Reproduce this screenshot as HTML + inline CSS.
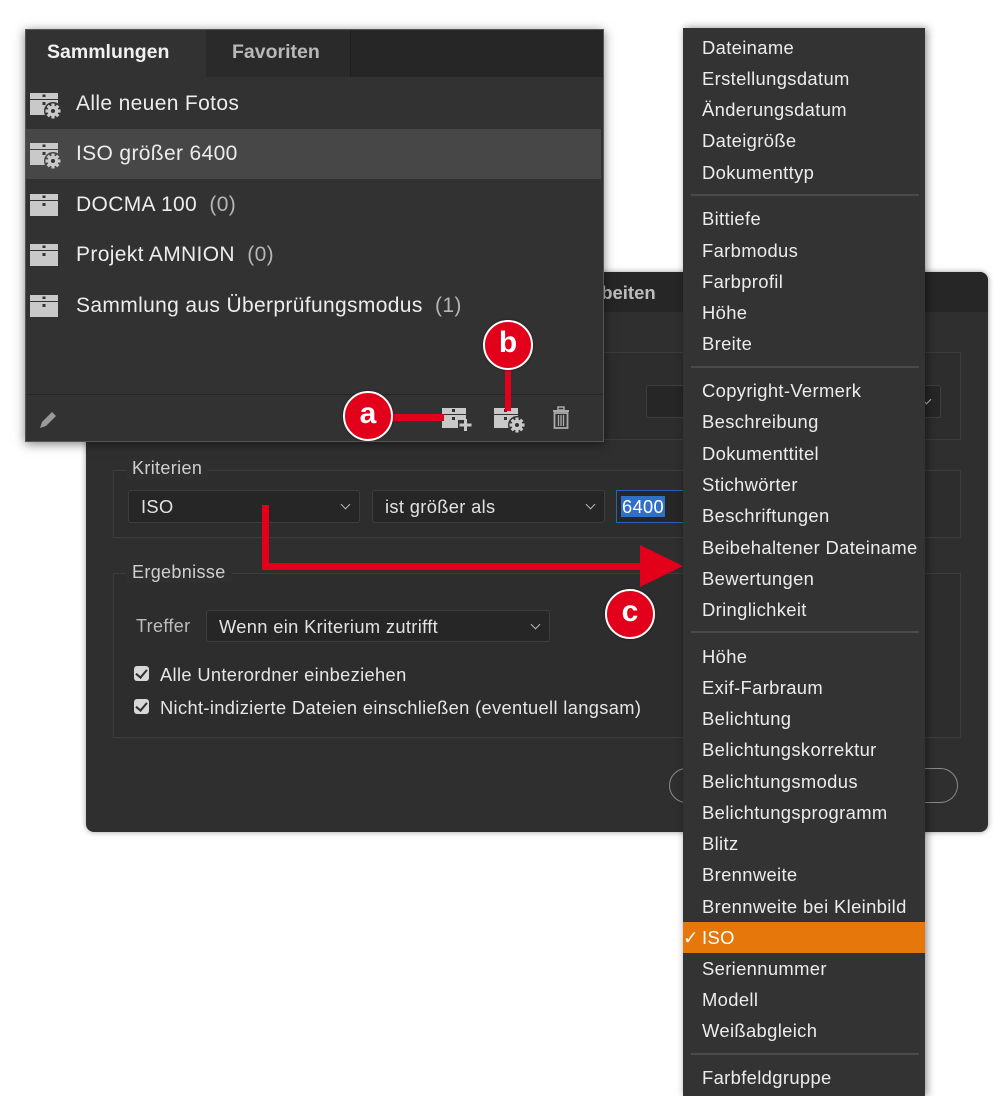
<!DOCTYPE html>
<html><head><meta charset="utf-8"><style>
*{margin:0;padding:0;box-sizing:border-box}
body{width:1000px;height:1096px;background:#fff;position:relative;overflow:hidden;font-family:"Liberation Sans",sans-serif;color:#e6e6e6}
.a{position:absolute}
.dlg{left:86px;top:272px;width:902px;height:560px;background:#2f2f2f;border-radius:8px;overflow:hidden;box-shadow:0 0 6px rgba(0,0,0,.4);letter-spacing:.35px}
.grp{border:1px solid #3c3c3c;background:#2d2d2d}
.sel{background:#262626;border:1px solid #3e3e3e;border-radius:3px;font-size:18.3px;line-height:31px;padding-left:12px;color:#e2e2e2}
.chev{position:absolute;right:10px;top:10px;width:7px;height:7px;border-right:1.5px solid #bbb;border-bottom:1.5px solid #bbb;transform:rotate(45deg)}
.lbl{font-size:18px;color:#cfcfcf;background:#2f2f2f;padding:0 6px}
.panel{left:25px;top:29px;width:579px;height:413px;background:#323232;box-shadow:0 2px 10px rgba(0,0,0,.5);border:1px solid #555}
.row{position:absolute;left:0;width:575px;height:50px;font-size:21px;line-height:50px;padding-left:50px;color:#ececec;letter-spacing:.35px}
.row .c{color:#b5b5b5}
.menu{left:683px;top:28px;width:242px;height:1068px;background:#333;box-shadow:2px 0 8px rgba(0,0,0,.45)}
.mi{position:absolute;left:0;width:242px;height:31px;line-height:31px;padding-left:19px;font-size:18.4px;color:#ececec;letter-spacing:.35px}
.sep{position:absolute;left:8px;width:228px;height:2px;background:#4a4a4a}
.cb{position:absolute;width:15px;height:15px;background:#d8d8d8;border-radius:3px}
.cb:after{content:"";position:absolute;left:4px;top:1px;width:5px;height:9px;border-right:2px solid #2f2f2f;border-bottom:2px solid #2f2f2f;transform:rotate(40deg)}
.circ{position:absolute;width:50px;height:50px;border-radius:50%;background:#e2001a;border:2.5px solid #fff;color:#fff;font-weight:bold;font-size:30px;text-align:center;line-height:42px;box-shadow:0 0 2px rgba(0,0,0,.5)}
.red{position:absolute;background:#e2001a}
</style></head><body>

<svg width="0" height="0" style="position:absolute">
  <defs>
    <g id="gr">
      <g fill="#c9c9c9">
        <rect x="-1.6" y="-7.5" width="3.2" height="15"/>
        <rect x="-1.6" y="-7.5" width="3.2" height="15" transform="rotate(45)"/>
        <rect x="-1.6" y="-7.5" width="3.2" height="15" transform="rotate(90)"/>
        <rect x="-1.6" y="-7.5" width="3.2" height="15" transform="rotate(135)"/>
        <circle r="5.3"/>
      </g>
      <circle r="2" fill="#333"/>
    </g>
    <g id="bx"><rect x="4" y="0" width="28" height="6" fill="#c9c9c9"/><rect x="4" y="7" width="28" height="15" fill="#c9c9c9"/><rect x="16.5" y="1.5" width="3" height="2.5" fill="#333"/><rect x="16.5" y="9" width="3" height="3" fill="#333"/></g>
  </defs>
</svg>

<!-- dialog -->
<div class="a dlg">
  <div class="a" style="left:0;top:0;width:902px;height:40px;background:#262626"></div>
  <div class="a" style="left:508px;top:10px;font-size:18.5px;font-weight:bold;color:#bdbdbd;letter-spacing:0">rbeiten</div>
  <div class="a grp" style="left:27px;top:80px;width:848px;height:88px"></div>
  <div class="a sel" style="left:560px;top:113px;width:295px;height:33px"><span class="chev"></span></div>
  <div class="a grp" style="left:27px;top:198px;width:848px;height:68px"></div>
  <div class="a lbl" style="left:40px;top:186px">Kriterien</div>
  <div class="a sel" style="left:42px;top:218px;width:232px;height:33px">ISO<span class="chev"></span></div>
  <div class="a sel" style="left:286px;top:218px;width:233px;height:33px">ist größer als<span class="chev"></span></div>
  <div class="a" style="left:530px;top:218px;width:80px;height:33px;border:1px solid #2a62b4;background:#262626"><span style="position:absolute;left:4px;top:5px;background:#2f6fc6;color:#fff;font-size:18.3px;line-height:21px;padding:0 1px">6400</span></div>
  <div class="a grp" style="left:27px;top:301px;width:848px;height:165px"></div>
  <div class="a lbl" style="left:40px;top:290px">Ergebnisse</div>
  <div class="a" style="left:50px;top:344px;font-size:18px;color:#bdbdbd">Treffer</div>
  <div class="a sel" style="left:120px;top:338px;width:344px;height:32px">Wenn ein Kriterium zutrifft<span class="chev"></span></div>
  <div class="cb" style="left:48px;top:394px"></div>
  <div class="a" style="left:74px;top:392px;font-size:18.3px">Alle Unterordner einbeziehen</div>
  <div class="cb" style="left:48px;top:427px"></div>
  <div class="a" style="left:74px;top:425px;font-size:18.3px">Nicht-indizierte Dateien einschließen (eventuell langsam)</div>
  <div class="a" style="left:583px;top:496px;width:289px;height:35px;border:1.5px solid #8a8a8a;border-radius:18px"></div>
</div>

<!-- collections panel -->
<div class="a panel">
  <div class="a" style="left:0;top:0;width:577px;height:47px;background:#262626"></div>
  <div class="a" style="left:0;top:0;width:180px;height:48px;background:#323232;font-size:19.5px;font-weight:bold;line-height:44px;padding-left:21px;color:#f0f0f0">Sammlungen</div>
  <div class="a" style="left:180px;top:0;width:145px;height:47px;background:#2a2a2a;border-right:1px solid #1f1f1f;font-size:19.5px;font-weight:bold;line-height:44px;padding-left:26px;color:#b8b8b8">Favoriten</div>
  <div class="row" style="top:49px">Alle neuen Fotos</div>
  <div class="row" style="top:99px;background:#474747">ISO größer 6400</div>
  <div class="row" style="top:150px">DOCMA 100 <span class="c">&nbsp;(0)</span></div>
  <div class="row" style="top:200px">Projekt AMNION <span class="c">&nbsp;(0)</span></div>
  <div class="row" style="top:251px">Sammlung aus Überprüfungsmodus <span class="c">&nbsp;(1)</span></div>
  <svg class="a" style="left:0;top:49px" width="50" height="260">
    <use href="#bx" x="0" y="14"/><circle cx="27" cy="32" r="9" fill="#323232"/><use href="#gr" transform="translate(27 32)"/>
    <use href="#bx" x="0" y="64"/><circle cx="27" cy="82" r="9" fill="#474747"/><use href="#gr" transform="translate(27 82)"/>
    <use href="#bx" x="0" y="115"/>
    <use href="#bx" x="0" y="165"/>
    <use href="#bx" x="0" y="216"/>
  </svg>
  <div class="a" style="left:0;top:364px;width:577px;height:1px;background:#262626"></div>
  <svg class="a" style="left:10px;top:378px" width="24" height="24"><path d="M4 20 L6 14 L16 4 L20 8 L10 18 Z" fill="#9a9a9a"/></svg>
  <svg class="a" style="left:414px;top:376px" width="40" height="26">
    <rect x="2" y="2" width="24" height="6" fill="#c9c9c9"/><rect x="2" y="9" width="24" height="13" fill="#c9c9c9"/><rect x="12" y="3" width="3" height="3" fill="#333"/><rect x="12" y="11" width="3" height="3" fill="#333"/>
    <rect x="18" y="14" width="14" height="10" fill="#323232"/><rect x="24" y="13" width="3" height="12" fill="#c9c9c9"/><rect x="19.5" y="17.5" width="12" height="3" fill="#c9c9c9"/>
  </svg>
  <svg class="a" style="left:466px;top:376px" width="40" height="30">
    <rect x="2" y="2" width="24" height="6" fill="#c9c9c9"/><rect x="2" y="9" width="24" height="13" fill="#c9c9c9"/><rect x="12" y="3" width="3" height="3" fill="#333"/><rect x="12" y="11" width="3" height="3" fill="#333"/>
    <circle cx="25" cy="19" r="9" fill="#323232"/><use href="#gr" transform="translate(25 19)"/>
  </svg>
  <svg class="a" style="left:524px;top:376px" width="22" height="26"><rect x="3" y="4" width="16" height="2" fill="#aaa"/><rect x="8" y="1" width="6" height="3" fill="none" stroke="#aaa" stroke-width="1.5"/><rect x="4.5" y="7" width="13" height="15" fill="none" stroke="#aaa" stroke-width="1.8"/><path d="M8.5 9v11M11 9v11M13.5 9v11" stroke="#aaa" stroke-width="1.3"/></svg>
</div>

<!-- menu -->
<div class="a menu">
  <div class="mi" style="top:4px">Dateiname</div>
  <div class="mi" style="top:35px">Erstellungsdatum</div>
  <div class="mi" style="top:66px">Änderungsdatum</div>
  <div class="mi" style="top:97px">Dateigröße</div>
  <div class="mi" style="top:129px">Dokumenttyp</div>
  <div class="sep" style="top:166px"></div>
  <div class="mi" style="top:175px">Bittiefe</div>
  <div class="mi" style="top:207px">Farbmodus</div>
  <div class="mi" style="top:238px">Farbprofil</div>
  <div class="mi" style="top:269px">Höhe</div>
  <div class="mi" style="top:300px">Breite</div>
  <div class="sep" style="top:338px"></div>
  <div class="mi" style="top:347px">Copyright-Vermerk</div>
  <div class="mi" style="top:378px">Beschreibung</div>
  <div class="mi" style="top:410px">Dokumenttitel</div>
  <div class="mi" style="top:441px">Stichwörter</div>
  <div class="mi" style="top:472px">Beschriftungen</div>
  <div class="mi" style="top:504px">Beibehaltener Dateiname</div>
  <div class="mi" style="top:535px">Bewertungen</div>
  <div class="mi" style="top:566px">Dringlichkeit</div>
  <div class="sep" style="top:603px"></div>
  <div class="mi" style="top:613px">Höhe</div>
  <div class="mi" style="top:644px">Exif-Farbraum</div>
  <div class="mi" style="top:675px">Belichtung</div>
  <div class="mi" style="top:706px">Belichtungskorrektur</div>
  <div class="mi" style="top:738px">Belichtungsmodus</div>
  <div class="mi" style="top:769px">Belichtungsprogramm</div>
  <div class="mi" style="top:800px">Blitz</div>
  <div class="mi" style="top:831px">Brennweite</div>
  <div class="mi" style="top:863px">Brennweite bei Kleinbild</div>
  <div class="mi" style="top:894px;background:#e5770b;color:#fff"><span style="position:absolute;left:0">✓</span>ISO</div>
  <div class="mi" style="top:925px">Seriennummer</div>
  <div class="mi" style="top:956px">Modell</div>
  <div class="mi" style="top:987px">Weißabgleich</div>
  <div class="sep" style="top:1025px"></div>
  <div class="mi" style="top:1034px">Farbfeldgruppe</div>
</div>

<!-- annotations -->
<div class="red" style="left:380px;top:414px;width:64px;height:7px"></div>
<div class="red" style="left:505px;top:355px;width:6px;height:56px"></div>
<div class="red" style="left:262px;top:505px;width:7px;height:65px"></div>
<div class="red" style="left:262px;top:563px;width:390px;height:7px"></div>
<svg class="a" style="left:640px;top:545px" width="45" height="44"><path d="M0 0 L43 21 L0 42 Z" fill="#e2001a"/></svg>
<div class="circ" style="left:343px;top:391px">a</div>
<div class="circ" style="left:483px;top:320px">b</div>
<div class="circ" style="left:605px;top:589px">c</div>
</body></html>
